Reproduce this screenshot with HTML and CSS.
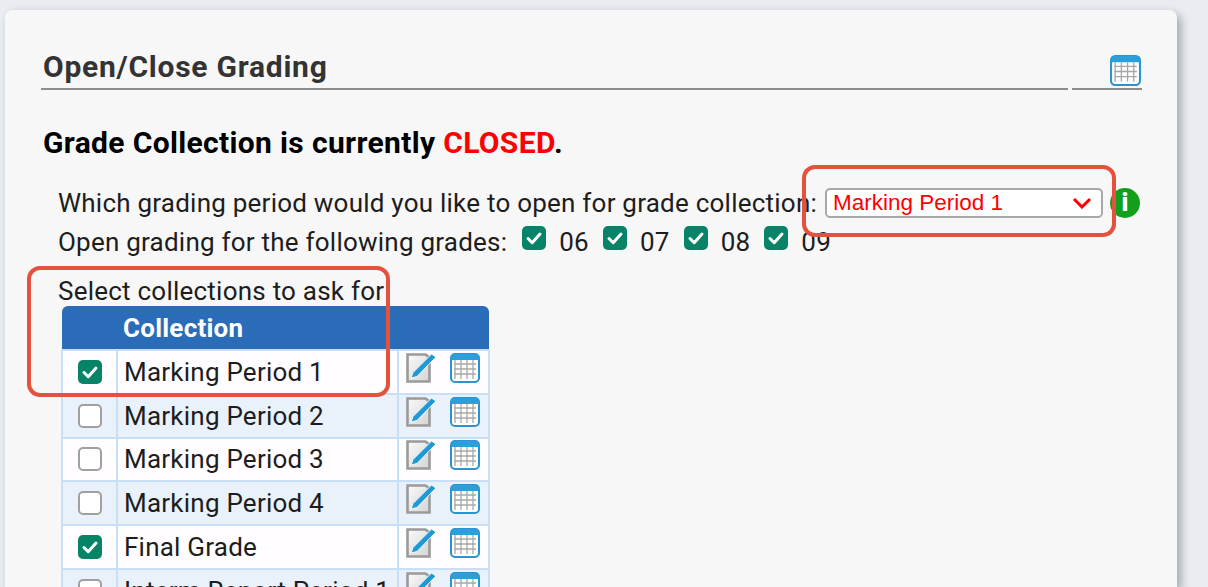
FILE: index.html
```html
<!DOCTYPE html>
<html lang="en">
<head>
    <meta charset="UTF-8">
    <title>Open/Close Grading</title>
    <link rel="stylesheet" href="styles.css">
</head>
<body>
    <svg class="icon-defs" width="0" height="0" aria-hidden="true">
        <defs>
            <linearGradient id="doc-fill" x1="0" y1="0" x2="1" y2="1">
                <stop offset="0" stop-color="#fafafa"/>
                <stop offset="1" stop-color="#d4d4d4"/>
            </linearGradient>
        </defs>
        <symbol id="icon-grid" viewBox="0 0 30 30">
            <rect x="1" y="1" width="28" height="28" rx="4" fill="#fff" stroke="#2a93d0" stroke-width="2"/>
            <path d="M1 7V5a4 4 0 0 1 4-4h20a4 4 0 0 1 4 4v2z" fill="#2a9fdc"/>
            <path d="M5 7v19M11 7v19M17 7v19M23 7v19M4 11h22M4 16h22M4 21h22" fill="none" stroke="#a8a8a8" stroke-width="1.3"/>
        </symbol>
        <symbol id="icon-edit" viewBox="0 0 30 30">
            <path d="M1.5 1.5h18l4 3v24h-22z" fill="url(#doc-fill)" stroke="#9a9a9a" stroke-width="2.6"/>
            <path d="M5 25l2-5.500L25.500 1 30 4 11 23.500z" fill="#1f9ad6" stroke="#f7f7f7" stroke-width="1"/>
        </symbol>
        <symbol id="icon-tick" viewBox="0 0 24 24">
            <path d="M6 12.500l4.200 4.200L18 8" fill="none" stroke="#fff" stroke-width="3" stroke-linecap="round" stroke-linejoin="round"/>
        </symbol>
    </svg>

    <div class="card">
        <div class="title-row">
            <h2 class="title">Open/Close Grading</h2>
            <div class="title-tools">
                <svg class="icon-grid"><use href="#icon-grid"/></svg>
            </div>
        </div>

        <p class="status">Grade Collection is currently <span class="closed">CLOSED</span>.</p>

        <div class="period-row">
            <span>Which grading period would you like to open for grade collection:</span>
            <div class="period-select">
                <span>Marking Period 1</span>
                <svg class="chevron" viewBox="0 0 20 12"><path d="M2 2l8 8 8-8" fill="none" stroke="#f00" stroke-width="3"/></svg>
            </div>
            <span class="info-dot">i</span>
        </div>

        <div class="grades-row">
            <span class="grades-label">Open grading for the following grades:</span>
            <span class="grade"><span class="check on"><svg><use href="#icon-tick"/></svg></span>06</span>
            <span class="grade"><span class="check on"><svg><use href="#icon-tick"/></svg></span>07</span>
            <span class="grade"><span class="check on"><svg><use href="#icon-tick"/></svg></span>08</span>
            <span class="grade"><span class="check on"><svg><use href="#icon-tick"/></svg></span>09</span>
        </div>

        <p class="collections-label">Select collections to ask for</p>

        <table class="collections">
            <thead>
                <tr><th class="col-check"></th><th class="col-name">Collection</th><th class="col-tools"></th></tr>
            </thead>
            <tbody>
                <tr>
                    <td><span class="check on"><svg><use href="#icon-tick"/></svg></span></td>
                    <td>Marking Period 1</td>
                    <td><div class="tools"><svg class="icon-edit"><use href="#icon-edit"/></svg><svg class="icon-grid"><use href="#icon-grid"/></svg></div></td>
                </tr>
                <tr>
                    <td><span class="check"></span></td>
                    <td>Marking Period 2</td>
                    <td><div class="tools"><svg class="icon-edit"><use href="#icon-edit"/></svg><svg class="icon-grid"><use href="#icon-grid"/></svg></div></td>
                </tr>
                <tr>
                    <td><span class="check"></span></td>
                    <td>Marking Period 3</td>
                    <td><div class="tools"><svg class="icon-edit"><use href="#icon-edit"/></svg><svg class="icon-grid"><use href="#icon-grid"/></svg></div></td>
                </tr>
                <tr>
                    <td><span class="check"></span></td>
                    <td>Marking Period 4</td>
                    <td><div class="tools"><svg class="icon-edit"><use href="#icon-edit"/></svg><svg class="icon-grid"><use href="#icon-grid"/></svg></div></td>
                </tr>
                <tr>
                    <td><span class="check on"><svg><use href="#icon-tick"/></svg></span></td>
                    <td>Final Grade</td>
                    <td><div class="tools"><svg class="icon-edit"><use href="#icon-edit"/></svg><svg class="icon-grid"><use href="#icon-grid"/></svg></div></td>
                </tr>
                <tr>
                    <td><span class="check"></span></td>
                    <td>Interm Report Period 1</td>
                    <td><div class="tools"><svg class="icon-edit"><use href="#icon-edit"/></svg><svg class="icon-grid"><use href="#icon-grid"/></svg></div></td>
                </tr>
            </tbody>
        </table>
    </div>

    <!-- annotation boxes drawn over the screenshot -->
    <div class="callout callout-period"></div>
    <div class="callout callout-collections"></div>
</body>
</html>
```

FILE: styles.css
```css
body {
    margin: 0;
    height: 587px;
    overflow: hidden;
    background-color: #e9edf2;
    font-family: Roboto, sans-serif;
    font-size: 26px;
    letter-spacing: 0.23px;
    color: #1d1d1d;
    position: relative;
    padding: 10px 31px 0 5px;
    box-sizing: border-box;
}

.icon-defs {
    position: absolute;
}

.card {
    background-color: #f7f7f7;
    border-radius: 8px 8px 0 0;
    box-shadow: 4px 4px 10px rgba(0, 0, 0, 0.3);
    height: 577px;
    padding: 36px 35px 0 36px;
    box-sizing: border-box;
    overflow: hidden;
}

.title-row {
    display: flex;
    gap: 4px;
    height: 44px;
}

.title {
    flex: 1;
    margin: 0;
    padding: 0 0 0 2px;
    font-size: 30px;
    font-weight: 700;
    letter-spacing: 0.75px;
    line-height: 42px;
    color: #333;
    border-bottom: 2px solid #8c8c8c;
}

.title-tools {
    width: 70px;
    border-bottom: 2px solid #8c8c8c;
    display: flex;
    justify-content: flex-end;
    box-sizing: border-box;
    padding-top: 9px;
}

.icon-grid {
    width: 30px;
    height: 30px;
    display: block;
}

.title-tools .icon-grid {
    width: 31px;
    height: 31px;
    margin-right: 1px;
}

.status {
    margin: 35px 0 0 2px;
    font-size: 30px;
    font-weight: 700;
    letter-spacing: 0.35px;
    line-height: 36px;
    color: #000;
}

.closed {
    color: #f00;
}

.period-row {
    display: flex;
    align-items: center;
    margin: 25px 0 0 17px;
    height: 34px;
    white-space: nowrap;
}

.period-select {
    width: 278px;
    height: 30px;
    margin-left: 8px;
    background-color: #fff;
    border: 2px solid #a8a8a8;
    border-radius: 5px;
    box-sizing: border-box;
    padding: 0 9px 0 6px;
    display: flex;
    align-items: center;
    justify-content: space-between;
    color: #f00;
    font-family: "Liberation Sans", sans-serif;
    font-size: 22.5px;
    letter-spacing: 0;
}

.chevron {
    width: 20px;
    height: 12px;
}

.info-dot {
    width: 30px;
    height: 30px;
    margin-left: 7px;
    border-radius: 50%;
    background-color: #12a01c;
    color: #fff;
    font-weight: 900;
    font-size: 25px;
    text-align: center;
    line-height: 30px;
}

.grades-row {
    display: flex;
    align-items: center;
    margin: 5px 0 0 17px;
    height: 34px;
    white-space: nowrap;
}

.grades-label {
    margin-right: 15px;
}

.grade {
    display: flex;
    align-items: center;
    margin-right: 14px;
}

.grade .check {
    margin-right: 13px;
    position: relative;
    top: -4px;
}

.check {
    display: inline-block;
    width: 24px;
    height: 24px;
    border: 2px solid #a0a0a0;
    border-radius: 5px;
    background-color: #fff;
    box-sizing: border-box;
    vertical-align: middle;
}

.check.on {
    background-color: #078467;
    border: 0;
}

.check svg {
    display: block;
    width: 24px;
    height: 24px;
}

.collections-label {
    margin: 17px 0 0 17px;
    line-height: 30px;
    white-space: nowrap;
}

.collections {
    margin: 0 0 0 20px;
    width: 429px;
    table-layout: fixed;
    border-collapse: collapse;
}

.collections th {
    height: 44px;
    padding: 0 0 0 6px;
    box-sizing: border-box;
    background-color: #2b6cb8;
    color: #fff;
    font-weight: 700;
    text-align: left;
}

.collections thead tr th:first-child {
    border-top-left-radius: 6px;
}

.collections thead tr th:last-child {
    border-top-right-radius: 6px;
}

.col-check {
    width: 55px;
}

.col-tools {
    width: 91px;
}

.collections td {
    height: 43.75px;
    padding: 0 0 0 6px;
    border: 2px solid #c9dff5;
    background-color: #fffdff;
    box-sizing: border-box;
    white-space: nowrap;
}

.collections tbody tr:nth-child(even) td {
    background-color: #e9f2fb;
}

.collections td:first-child {
    padding: 0;
    text-align: center;
    line-height: 0;
}

.collections td:last-child {
    padding-left: 7px;
}

.tools {
    display: flex;
    align-items: center;
    gap: 14px;
    margin-bottom: 8px;
}

.icon-edit {
    width: 30px;
    height: 30px;
    display: block;
}

.callout {
    position: absolute;
    border: 4px solid #e4513d;
    border-radius: 13px;
    box-sizing: border-box;
}

.callout-period {
    left: 802px;
    top: 165px;
    width: 314px;
    height: 72px;
}

.callout-collections {
    left: 27px;
    top: 266px;
    width: 363px;
    height: 131px;
}
```
